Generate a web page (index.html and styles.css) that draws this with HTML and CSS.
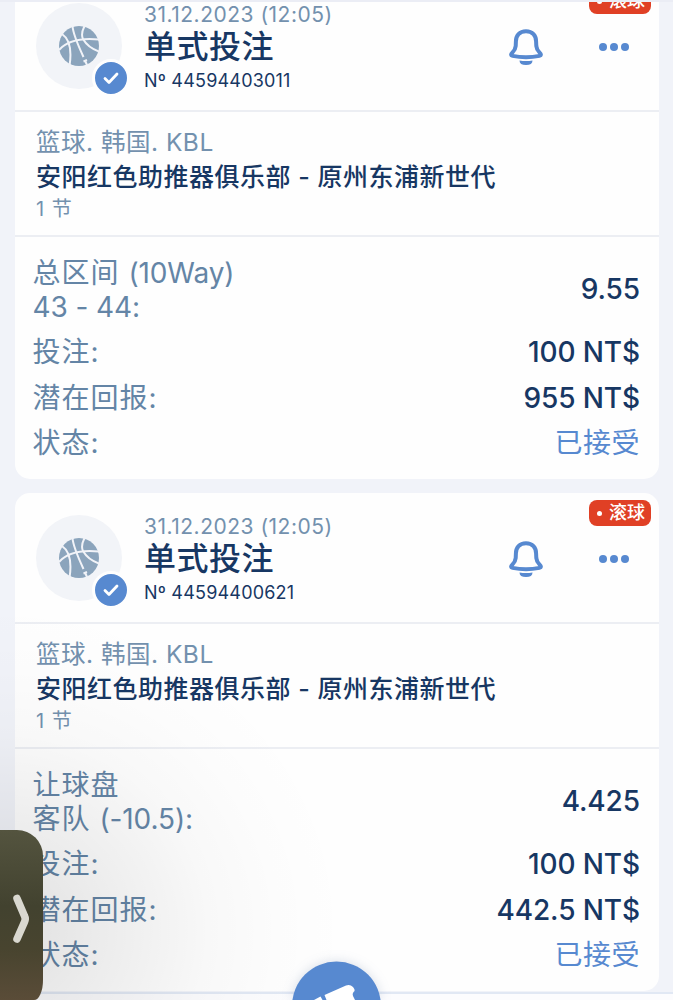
FILE: index.html
```
<!DOCTYPE html>
<html lang="zh">
<head>
    <meta charset="UTF-8">
    <meta name="viewport" content="width=device-width, initial-scale=1.0">
    <title>投注历史</title>
    <link rel="stylesheet" href="styles.css">
</head>
<body>
    <!-- Shared icons -->
    <svg class="sprite" width="0" height="0">
        <symbol id="ball" viewBox="0 0 40 40">
            <circle cx="20" cy="20" r="20" fill="#8ba4bc"/>
            <g fill="none" stroke="#f1f3f8" stroke-width="2">
                <path d="M13.5 0 C14 8 18 17 24.5 31"/>
                <path d="M25.5 0 C22 7 22.5 10 24 13 C28 20 33 23 40 25.5"/>
                <path d="M0 24 C7 16 20 11.5 40 13.5"/>
                <path d="M3 8 C12 14 12.5 27 10.5 40"/>
                <path d="M24.5 35.5 L28 34 M26 34.5 L28 39"/>
            </g>
        </symbol>
        <symbol id="bell" viewBox="0 0 34 36">
            <path d="M17 2.2 C10.5 2.2 6.9 6.8 6.9 12.5 L6.7 17 C6.4 20.5 5.2 21.8 3.4 23.6 C1.5 25.6 1.8 26.5 3.5 26.9 C12 28.5 22 28.5 30.5 26.9 C32.2 26.5 32.5 25.6 30.6 23.6 C28.8 21.8 27.6 20.5 27.3 17 L27.1 12.5 C27.1 6.8 23.5 2.2 17 2.2 Z" fill="none" stroke="#5789d0" stroke-width="4"/>
            <path d="M10.5 31.500 Q17 32.500 23.5 31.500 Q23.5 36 17 36 Q10.5 36 10.5 31.500 Z" fill="#5789d0"/>
        </symbol>
        <symbol id="check" viewBox="0 0 32 32">
            <path d="M10 16.5 L14 20.5 L22 12" fill="none" stroke="#fff" stroke-width="2.8" stroke-linecap="round" stroke-linejoin="round"/>
        </symbol>
    </svg>

    <main class="bets">
        <article class="card">
            <header class="card-head">
                <div class="avatar">
                    <svg class="ball"><use href="#ball"/></svg>
                    <span class="status-badge"><svg><use href="#check"/></svg></span>
                </div>
                <div class="info">
                    <div class="date">31.12.2023 (12:05)</div>
                    <h2 class="type">单式投注</h2>
                    <div class="number">Nº 44594403011</div>
                </div>
                <svg class="bell"><use href="#bell"/></svg>
                <div class="more"><i></i><i></i><i></i></div>
                <span class="live">滚球</span>
            </header>
            <section class="match">
                <div class="league">篮球. 韩国. KBL</div>
                <h3 class="teams">安阳红色助推器俱乐部 - 原州东浦新世代</h3>
                <div class="period">1 节</div>
            </section>
            <section class="rows">
                <div class="row market"><span>总区间 <em>(10Way)</em><br><em>43 - 44:</em></span><b>9.55</b></div>
                <div class="row"><span>投注:</span><b>100 NT$</b></div>
                <div class="row"><span>潜在回报:</span><b>955 NT$</b></div>
                <div class="row"><span>状态:</span><b class="accepted">已接受</b></div>
            </section>
        </article>

        <article class="card">
            <header class="card-head">
                <div class="avatar">
                    <svg class="ball"><use href="#ball"/></svg>
                    <span class="status-badge"><svg><use href="#check"/></svg></span>
                </div>
                <div class="info">
                    <div class="date">31.12.2023 (12:05)</div>
                    <h2 class="type">单式投注</h2>
                    <div class="number">Nº 44594400621</div>
                </div>
                <svg class="bell"><use href="#bell"/></svg>
                <div class="more"><i></i><i></i><i></i></div>
                <span class="live">滚球</span>
            </header>
            <section class="match">
                <div class="league">篮球. 韩国. KBL</div>
                <h3 class="teams">安阳红色助推器俱乐部 - 原州东浦新世代</h3>
                <div class="period">1 节</div>
            </section>
            <section class="rows">
                <div class="row market"><span>让球盘<br>客队 <em>(-10.5):</em></span><b>4.425</b></div>
                <div class="row"><span>投注:</span><b>100 NT$</b></div>
                <div class="row"><span>潜在回报:</span><b>442.5 NT$</b></div>
                <div class="row"><span>状态:</span><b class="accepted">已接受</b></div>
            </section>
        </article>
    </main>

    <!-- Bottom bar with the coupon button -->
    <div class="tabbar"></div>
    <div class="shade"></div>
    <svg class="coupon" viewBox="0 0 90 39">
        <circle cx="44.5" cy="45" r="44.5" fill="#5789d0"/>
        <path d="M22 39 L28.5 35.5 L30.5 39 Z" fill="#fff"/>
        <path d="M34.5 39 L32.5 34 L54 24.5 Q58 23 61 26 Q64 29.5 61.500 31 Q60 33 61 35 L63 39 Z" fill="#fff"/>
    </svg>

    <!-- Side drawer handle -->
    <div class="handle">
        <svg viewBox="0 0 43 170">
            <path d="M17 68.5 L24.5 86 Q26 89 24.5 92 L17 109" fill="none" stroke="#d9d8d0" stroke-width="7.5" stroke-linecap="round" stroke-linejoin="round"/>
        </svg>
    </div>
</body>
</html>
```
FILE: styles.css
```
* {
    box-sizing: border-box;
    margin: 0;
    padding: 0;
}

body {
    position: relative;
    height: 1000px;
    overflow: hidden;
    background: #f1f3f9;
    font-family: Inter, "Noto Sans CJK SC", sans-serif;
    color: #173763;
}

body::before {
    content: '';
    position: absolute;
    z-index: 2;
    top: 0;
    left: 0;
    right: 0;
    height: 2px;
    background: #ebedf5;
}

.sprite {
    position: absolute;
}

svg {
    display: block;
}

.bets {
    display: flex;
    flex-direction: column;
    gap: 14px;
    margin-top: -19px;
    padding: 0 14px 0 14.5px;
}

.card {
    height: 498px;
    background: #fefefe;
    border-radius: 15px;
}

/* Card header */
.card-head {
    position: relative;
    display: flex;
    height: 131px;
    padding: 22px 30px 0 21.5px;
    border-bottom: 2px solid #eceef3;
}

.avatar {
    position: relative;
    display: flex;
    justify-content: center;
    align-items: center;
    width: 86px;
    height: 86px;
    border-radius: 50%;
    background: #f2f4f8;
}

.ball {
    width: 40px;
    height: 40px;
}

.status-badge {
    position: absolute;
    left: 56px;
    top: 56px;
    width: 38px;
    height: 38px;
    border: 3px solid #fefefe;
    border-radius: 50%;
    background: #5789d0;
}

.status-badge svg {
    width: 32px;
    height: 32px;
}

.info {
    flex: 1;
    margin-left: 22px;
}

.date {
    font-size: 21px;
    line-height: 24px;
    letter-spacing: 0.5px;
    color: #7391ae;
}

.type {
    font-size: 32px;
    font-weight: 500;
    line-height: 40px;
    letter-spacing: 0.5px;
}

.number {
    font-size: 18px;
    line-height: 27px;
    letter-spacing: 0.2px;
}

.bell {
    width: 34px;
    height: 36px;
    margin: 26px 56px 0 0;
}

.more {
    display: flex;
    gap: 3px;
    margin-top: 39.5px;
}

.more i {
    width: 8px;
    height: 8px;
    border-radius: 50%;
    background: #5789d0;
}

.live {
    position: absolute;
    top: 7px;
    right: 8px;
    display: flex;
    align-items: center;
    gap: 8px;
    width: 62px;
    height: 26px;
    padding-left: 8px;
    border-radius: 8px;
    background: #e04025;
    color: #fff;
    font-size: 18px;
    font-weight: 500;
    line-height: 26px;
}

.live::before {
    content: '';
    width: 5px;
    height: 5px;
    margin-right: -1px;
    border-radius: 50%;
    background: #fff;
}

/* League and teams */
.match {
    height: 125px;
    padding: 14px 21.5px 0;
    border-bottom: 2px solid #eceef3;
    color: #7391ae;
}

.league {
    font-size: 24.5px;
    line-height: 32px;
    letter-spacing: 0.5px;
}

.teams {
    font-size: 25px;
    font-weight: 500;
    line-height: 38px;
    letter-spacing: 0.5px;
    color: #173763;
    white-space: nowrap;
}

.period {
    font-size: 20px;
    line-height: 26px;
    letter-spacing: 1px;
}

/* Bet values */
.rows {
    padding: 17px 19px 0 18px;
}

.row {
    display: flex;
    justify-content: space-between;
    align-items: center;
    height: 45.7px;
    font-size: 28px;
    line-height: 34px;
    letter-spacing: 1px;
    color: #6485a6;
}

.row em {
    font-style: normal;
    letter-spacing: -0.1px;
}

.row b {
    font-weight: 500;
    letter-spacing: -0.1px;
    color: #173763;
}

.row.market {
    height: 72px;
    margin-bottom: 3px;
}

.row.market b {
    margin-top: -2px;
}

.row .accepted {
    font-weight: 400;
    letter-spacing: 0.5px;
    color: #5789d0;
}

.tabbar {
    position: absolute;
    left: 0;
    right: 0;
    bottom: 0;
    height: 8px;
    border-top: 2px solid #e1e8f4;
    background: #fcfcfe;
}

/* Soft shadow thrown by the drawer handle */
.shade {
    position: absolute;
    left: 0;
    top: 580px;
    width: 360px;
    height: 420px;
    background: radial-gradient(ellipse 350px 330px at 0 350px, rgba(0, 0, 0, 0.12), rgba(0, 0, 0, 0.07) 30%, rgba(0, 0, 0, 0.025) 60%, rgba(0, 0, 0, 0.008) 80%, rgba(0, 0, 0, 0));
}

.coupon {
    position: absolute;
    left: 292px;
    top: 961px;
    width: 90px;
    height: 39px;
    filter: drop-shadow(0 0 6px rgba(60, 90, 140, 0.2));
}

.handle {
    position: absolute;
    left: 0;
    top: 830px;
    width: 43px;
    height: 170px;
    border-radius: 0 26px 9px 0 / 0 26px 20px 0;
    background: linear-gradient(#54543f, #42422f 45%, #48442f 70%, #5a4c38);
}

.handle svg {
    width: 43px;
    height: 170px;
}
```
